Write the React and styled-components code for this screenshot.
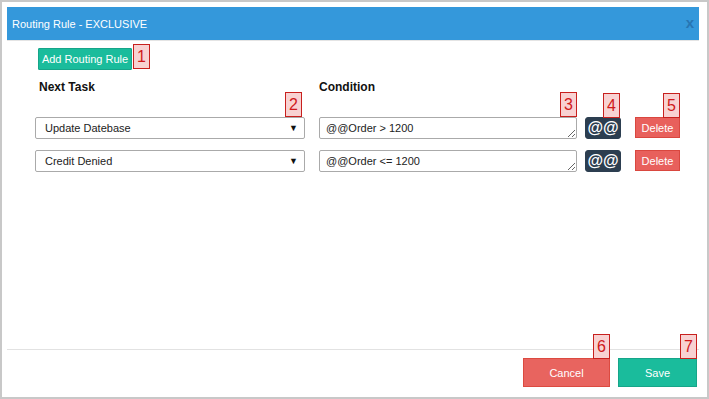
import styled, { createGlobalStyle } from 'styled-components';

const GlobalStyle = createGlobalStyle`
  body {
    margin: 0;
    font-family: "Liberation Sans", Arial, sans-serif;
    background: #fff;
  }
`;

const Frame = styled.div`
  width: 709px;
  height: 399px;
  box-sizing: border-box;
  border: 2px solid #c8c8c8;
  padding: 5px 8px 0 5px;
  display: flex;
  flex-direction: column;
`;

const Header = styled.div`
  height: 33px;
  background: #3498db;
  border-bottom: 1px solid #e4e4e4;
  display: flex;
  align-items: center;
  justify-content: space-between;
  padding: 0 5px;
  color: #fff;
  font-size: 11px;
`;

const Close = styled.span`
  color: #2775b3;
  font-weight: bold;
  font-size: 15px;
  margin: -3px 0 0;
`;

const Body = styled.div`
  flex: 1;
  padding: 3px 0 0 28px;
`;

const Toolbar = styled.div`
  display: flex;
  align-items: flex-end;
  margin-left: 3px;
`;

const Badge = styled.span`
  box-sizing: border-box;
  width: 17px;
  height: 25px;
  background: #f8d2d2;
  border: 1px solid #c8201e;
  color: #d0191b;
  font-size: 16px;
  font-weight: normal;
  line-height: 23px;
  text-align: center;
  display: inline-block;
`;

const InlineBadge = styled(Badge)`
  margin: 0 0 1px 1px;
`;

const FloatBadge = styled(Badge)`
  position: absolute;
  right: ${(p) => p.$right || 0}px;
  bottom: 100%;
`;

const Button = styled.button`
  position: relative;
  box-sizing: border-box;
  height: ${(p) => p.$h || 22}px;
  width: ${(p) => p.$w}px;
  margin-left: ${(p) => p.$ml || 0}px;
  background: ${(p) => p.$bg};
  border: 1px solid ${(p) => p.$border};
  border-radius: ${(p) => p.$radius || 0}px;
  color: #fff;
  font-family: "Liberation Sans", Arial, sans-serif;
  font-size: ${(p) => p.$fs || 11}px;
  font-weight: ${(p) => (p.$bold ? 'bold' : 'normal')};
  white-space: nowrap;
  padding: 0;
  cursor: pointer;
`;

const HeadRow = styled.div`
  display: flex;
  margin-top: 10px;
  font-size: 12px;
  font-weight: bold;
  color: #111;
`;

const HeadCell = styled.div`
  box-sizing: border-box;
  width: ${(p) => p.$w}px;
  padding-left: ${(p) => p.$pl || 0}px;
`;

const Rows = styled.div`
  display: flex;
  flex-direction: column;
  gap: 11px;
  margin-top: 23px;
`;

const Row = styled.div`
  display: flex;
  align-items: flex-start;
`;

const Field = styled.div`
  position: relative;
  margin-left: ${(p) => p.$ml || 0}px;
`;

const Select = styled.div`
  box-sizing: border-box;
  width: 270px;
  height: 22px;
  border: 1px solid #aaa;
  border-radius: 2px;
  display: flex;
  align-items: center;
  justify-content: space-between;
  padding: 0 6px 0 9px;
  font-size: 11px;
  color: #222;
`;

const Arrow = styled.span`
  font-size: 9px;
  color: #111;
`;

const Condition = styled.textarea`
  display: block;
  box-sizing: border-box;
  width: 258px;
  height: 22px;
  border: 1px solid #aaa;
  border-radius: 2px;
  padding: 3px 6px;
  font-family: "Liberation Sans", Arial, sans-serif;
  font-size: 11px;
  line-height: 14px;
  color: #222;
  resize: vertical;
  overflow: hidden;
`;

const Footer = styled.div`
  height: 48px;
  box-sizing: border-box;
  border-top: 1px solid #e2e2e2;
  display: flex;
  justify-content: flex-end;
  align-items: flex-start;
  gap: 8px;
  padding: 8px 2px 0 0;
`;

const rules = [
  { task: 'Update Datebase', cond: '@@Order > 1200' },
  { task: 'Credit Denied', cond: '@@Order <= 1200' },
];

export default function App() {
  return (
    <>
      <GlobalStyle />
      <Frame>
        <Header>
          <span>Routing Rule - EXCLUSIVE</span>
          <Close>x</Close>
        </Header>
        <Body>
          <Toolbar>
            <Button $w={94} $bg="#1abc9c" $border="#16a589" $radius={1}>
              Add Routing Rule
            </Button>
            <InlineBadge>1</InlineBadge>
          </Toolbar>
          <HeadRow>
            <HeadCell $w={284} $pl={4}>Next Task</HeadCell>
            <HeadCell $w={258}>Condition</HeadCell>
          </HeadRow>
          <Rows>
            {rules.map((rule, i) => (
              <Row key={rule.task}>
                <Field>
                  <Select>
                    <span>{rule.task}</span>
                    <Arrow>▼</Arrow>
                  </Select>
                  {i === 0 && <FloatBadge $right={3}>2</FloatBadge>}
                </Field>
                <Field $ml={14}>
                  <Condition defaultValue={rule.cond} />
                  {i === 0 && <FloatBadge>3</FloatBadge>}
                </Field>
                <Button
                  $w={36}
                  $ml={8}
                  $bg="#2c3e50"
                  $border="#2c3e50"
                  $radius={3}
                  $fs={16}
                  $bold
                >
                  @@
                  {i === 0 && <FloatBadge $right={0}>4</FloatBadge>}
                </Button>
                <Button $w={45} $h={21} $ml={14} $bg="#e8605c" $border="#d9473f">
                  Delete
                  {i === 0 && <FloatBadge $right={-1}>5</FloatBadge>}
                </Button>
              </Row>
            ))}
          </Rows>
        </Body>
        <Footer>
          <Button $w={87} $h={29} $bg="#e8645f" $border="#dc4a40">
            Cancel
            <FloatBadge $right={-1}>6</FloatBadge>
          </Button>
          <Button $w={79} $h={29} $bg="#1abc9c" $border="#16a589">
            Save
            <FloatBadge $right={-1}>7</FloatBadge>
          </Button>
        </Footer>
      </Frame>
    </>
  );
}
